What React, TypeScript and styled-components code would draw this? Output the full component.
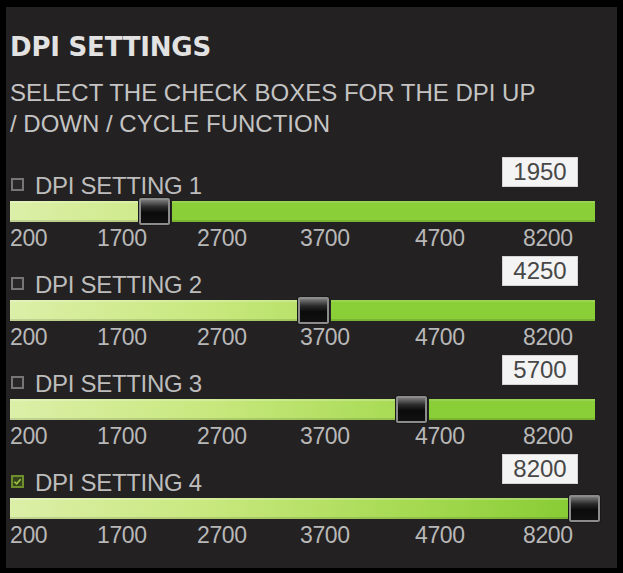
import React from 'react';
import styled, { createGlobalStyle } from 'styled-components';

const TRACK = 558;

const GlobalStyle = createGlobalStyle`
  html, body {
    margin: 0;
    padding: 0;
    background: #000;
  }

  body {
    font-family: "Liberation Sans", Arial, sans-serif;
  }
`;

const Panel = styled.div`
  box-sizing: border-box;
  margin: 7px 6px 0 6px;
  height: 561px;
  padding: 25px 0 0 4px;
  background: #242122;
`;

const Title = styled.h1`
  margin: 0;
  font-family: "DejaVu Sans", "Liberation Sans", sans-serif;
  font-weight: bold;
  font-size: 26px;
  line-height: 30px;
  letter-spacing: -0.2px;
  color: #e2e2e2;
`;

const Intro = styled.p`
  margin: 15px 0 0;
  font-size: 24px;
  line-height: 31px;
  white-space: nowrap;
  color: #c4c4c4;
`;

const Settings = styled.div`
  display: flex;
  flex-direction: column;
  gap: 6px;
  width: 590px;
  margin-top: 18px;
`;

const Header = styled.div`
  display: flex;
  justify-content: space-between;
  align-items: flex-start;
  height: 43px;
`;

const Label = styled.div`
  display: flex;
  align-items: flex-start;
  gap: 11px;
  margin-top: 16px;
  font-size: 24px;
  line-height: 26px;
  letter-spacing: -0.3px;
  color: #bdbdbd;
`;

const Box = styled.span<{ $checked?: boolean }>`
  display: flex;
  align-items: center;
  justify-content: center;
  box-sizing: border-box;
  width: 13px;
  height: 13px;
  margin: 5px 0 0 1px;
  border: 2px solid ${(p) => (p.$checked ? '#6f8f2c' : '#767676')};
  background: ${(p) => (p.$checked ? '#35421c' : '#2a2728')};

  svg {
    width: 9px;
    height: 9px;
  }
`;

const Value = styled.div`
  box-sizing: border-box;
  width: 76px;
  height: 30px;
  margin-right: 22px;
  border: 1px solid #d4d4d4;
  background: #f4f4f4;
  color: #474747;
  font-size: 24px;
  line-height: 28px;
  text-align: center;
`;

const Track = styled.div`
  display: flex;
  align-items: center;
  height: 22px;
`;

const Fill = styled.div`
  flex: none;
  height: 21px;
  background: linear-gradient(
    90deg,
    #dcefa8 0px,
    #c8e87e 200px,
    #a6da52 400px,
    #88cc35 558px
  );
  background-size: ${TRACK}px 100%;
  box-shadow: inset 0 2px 0 rgba(255, 255, 255, 0.22),
    inset 0 -2px 0 rgba(0, 0, 0, 0.12);
`;

const Knob = styled.div`
  flex: none;
  box-sizing: border-box;
  width: 31px;
  height: 27px;
  margin-left: 1px;
  border: 2px solid #8c8c8c;
  border-radius: 2px;
  background: linear-gradient(#7a7a7a 0, #2a2a2a 30%, #0b0b0b 55%, #111 100%);
  box-shadow: 0 0 0 1px #1a1a1a;
`;

const Rest = styled.div`
  flex: 1 1 0;
  min-width: 0;
  height: 21px;
  margin: 0 5px 0 2px;
  background: #8ace38;
  box-shadow: inset 0 2px 0 rgba(255, 255, 255, 0.12),
    inset 0 -2px 0 rgba(0, 0, 0, 0.12);
`;

const Ticks = styled.div`
  display: grid;
  grid-template-columns: 87px 100px 103px 115px 108px auto;
  margin-top: 4px;
  font-size: 23px;
  line-height: 24px;
  letter-spacing: -0.4px;
  color: #b8b8b8;
`;

type SettingType = {
  id: number;
  value: number;
  position: number;
  checked: boolean;
};

const settings: SettingType[] = [
  { id: 1, value: 1950, position: 0.229, checked: false },
  { id: 2, value: 4250, position: 0.514, checked: false },
  { id: 3, value: 5700, position: 0.69, checked: false },
  { id: 4, value: 8200, position: 1, checked: true },
];

const ticks = [200, 1700, 2700, 3700, 4700, 8200];

const Check = () => (
  <svg viewBox="0 0 10 10">
    <path d="M1.5 5.2 L4 7.5 L8.5 2.5" fill="none" stroke="#9cc43e" strokeWidth="1.8" />
  </svg>
);

const DpiSetting = ({ id, value, position, checked }: SettingType) => {
  const fill = Math.round(position * TRACK);

  return (
    <div>
      <Header>
        <Label>
          <Box $checked={checked}>{checked && <Check />}</Box>
          DPI SETTING {id}
        </Label>
        <Value>{value}</Value>
      </Header>
      <Track>
        <Fill style={{ width: fill }} />
        <Knob />
        {fill < TRACK && <Rest />}
      </Track>
      <Ticks>
        {ticks.map((t) => (
          <span key={t}>{t}</span>
        ))}
      </Ticks>
    </div>
  );
};

const App = () => (
  <>
    <GlobalStyle />
    <Panel>
      <Title>DPI SETTINGS</Title>
      <Intro>
        SELECT THE CHECK BOXES FOR THE DPI UP
        <br />/ DOWN / CYCLE FUNCTION
      </Intro>
      <Settings>
        {settings.map((s) => (
          <DpiSetting key={s.id} {...s} />
        ))}
      </Settings>
    </Panel>
  </>
);

export default App;
